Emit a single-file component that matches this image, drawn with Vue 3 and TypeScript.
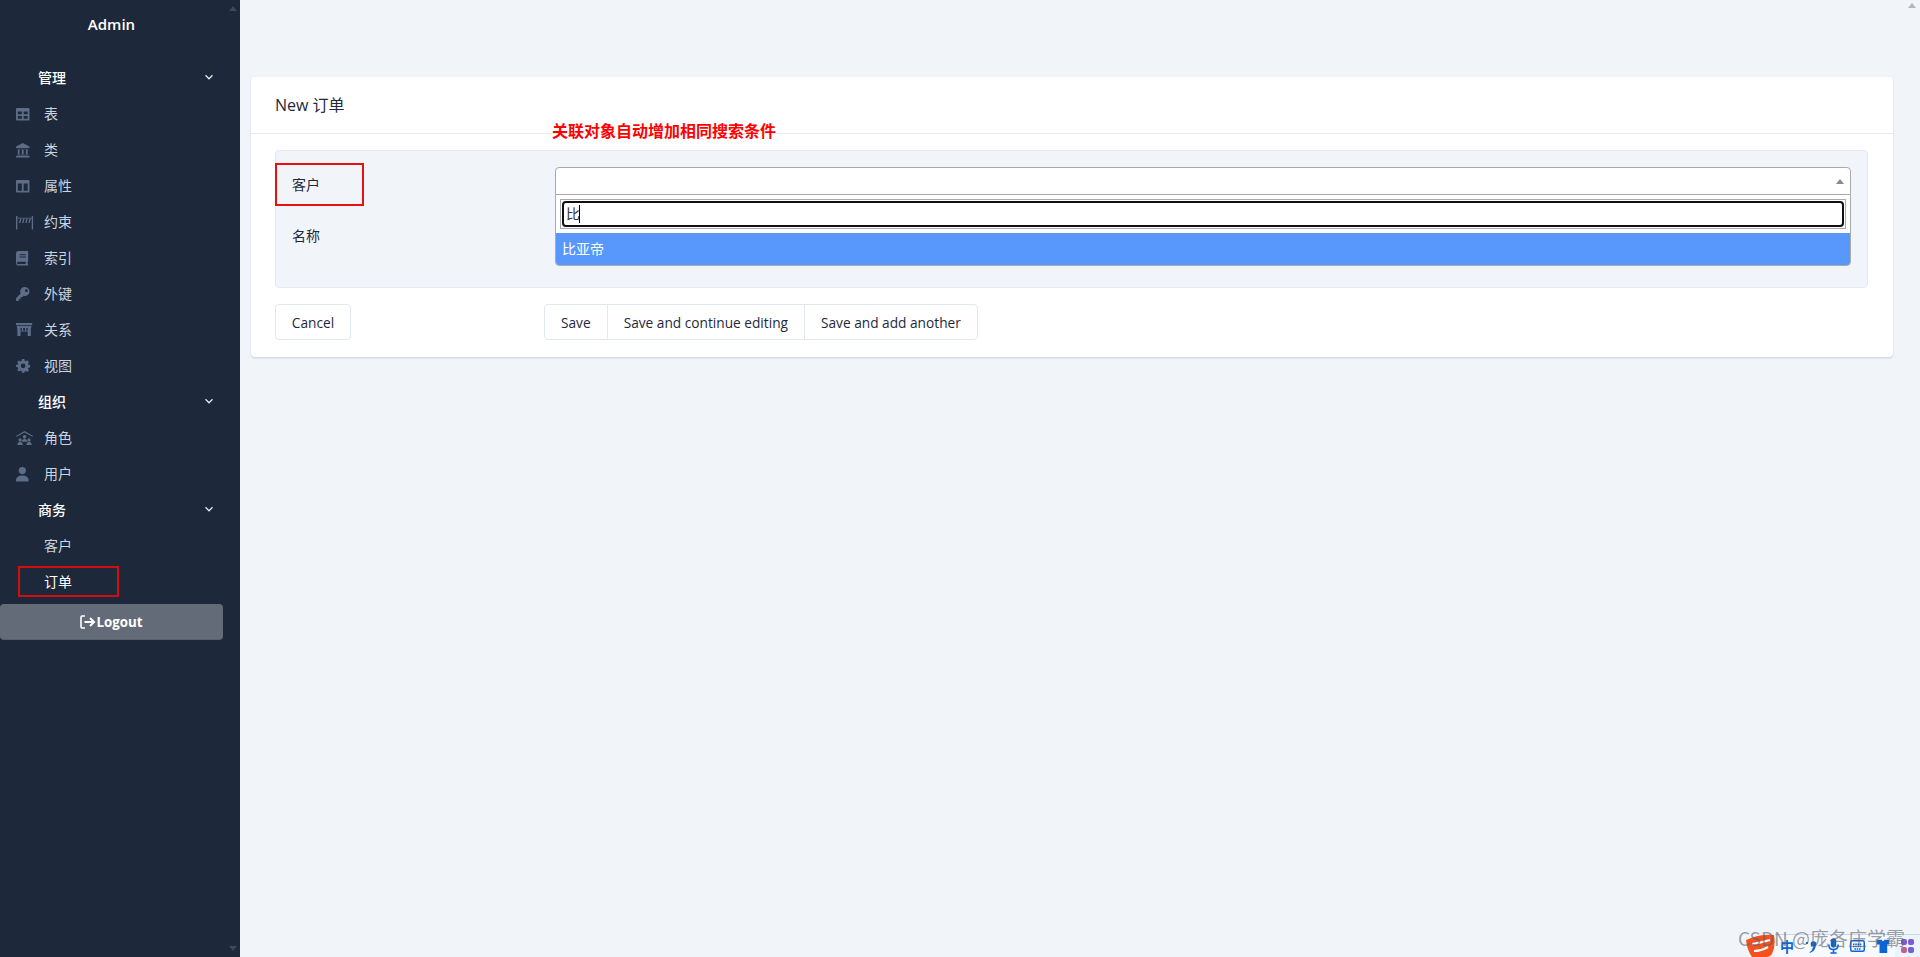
<script setup lang="ts">
interface NavItem {
  label: string
  icon?: string
  kind: 'group' | 'item'
  active?: boolean
}

const nav: NavItem[] = [
  { label: '管理', kind: 'group' },
  { label: '表', kind: 'item', icon: 'table' },
  { label: '类', kind: 'item', icon: 'bank' },
  { label: '属性', kind: 'item', icon: 'columns' },
  { label: '约束', kind: 'item', icon: 'barrier' },
  { label: '索引', kind: 'item', icon: 'book' },
  { label: '外键', kind: 'item', icon: 'key' },
  { label: '关系', kind: 'item', icon: 'torii' },
  { label: '视图', kind: 'item', icon: 'gear' },
  { label: '组织', kind: 'group' },
  { label: '角色', kind: 'item', icon: 'roles' },
  { label: '用户', kind: 'item', icon: 'user' },
  { label: '商务', kind: 'group' },
  { label: '客户', kind: 'item' },
  { label: '订单', kind: 'item', active: true }
]
</script>

<template>
  <div class="page">
    <aside class="sidebar">
      <div class="brand">Admin</div>
      <nav class="nav">
        <div
          v-for="n in nav"
          :key="n.label"
          class="nav-row"
          :class="[n.kind, { active: n.active }]"
        >
          <svg v-if="n.icon" class="ico" viewBox="0 0 20 17.800">
            <g v-if="n.icon === 'table'">
              <path fill-rule="evenodd" d="M1 1h13a1 1 0 0 1 1 1v12a1 1 0 0 1-1 1H1a1 1 0 0 1-1-1V2a1 1 0 0 1 1-1zm1 4v3h4.500V5zm6.500 0v3H13V5zM2 10v3h4.500v-3zm6.500 0v3H13v-3z" />
            </g>
            <g v-else-if="n.icon === 'bank'">
              <path d="M7.500 0 15 4v1.500H0V4zM1 6.500h13V7H1zM2 7.500h2v5H2zM6.500 7.500h2v5h-2zM11 7.500h2v5h-2zM1 13h13v1H1zM0 14.500h15V16H0z" />
            </g>
            <g v-else-if="n.icon === 'columns'">
              <path fill-rule="evenodd" d="M1 1h13a1 1 0 0 1 1 1v12a1 1 0 0 1-1 1H1a1 1 0 0 1-1-1V2a1 1 0 0 1 1-1zm1 4v8h4.500V5zm6.500 0v8H13V5z" />
            </g>
            <g v-else-if="n.icon === 'barrier'">
              <path d="M0 1h1.500v15H0zM17.500 1H19v15h-1.500zM1.500 3h16v1h-16z" />
              <path d="M4.500 4h1.500L4.800 9H3.300zM8 4h1.500L8.300 9H6.800zM11.500 4H13l-1.200 5h-1.500zM15 4h1.500l-1.200 5h-1.500z" />
            </g>
            <g v-else-if="n.icon === 'book'">
              <path fill-rule="evenodd" d="M2.500 0H13.500v11.500l-.6.8v1.400l.6.8V16H2.500A2.500 2.500 0 0 1 0 13.500v-11A2.500 2.500 0 0 1 2.500 0zM4 3.500v1.200h7V3.500zm0 2.500v1.200h7V6zm-1.500 6a1.300 1.300 0 0 0 0 2.600h8.300V12z" />
            </g>
            <g v-else-if="n.icon === 'key'">
              <path fill-rule="evenodd" d="M10 0a5 5 0 1 1-1.500 9.800L7 11.500H5V13.500H3V15.500H0v-3l5.200-5.200A5 5 0 0 1 10 0zm1.500 2.500a1.600 1.600 0 1 0 0 3.200 1.600 1.600 0 0 0 0-3.200z" />
            </g>
            <g v-else-if="n.icon === 'torii'">
              <path d="M0 0h18v2.500H0zM1 3.200h16v2.300H1zM1.500 5.500h3.500v9H1.500zM13 5.500h3.500v9H13zM6.500 5.500h1.500v3H6.500zM10 5.500h1.500v3H10zM5 8.500h8v1H5z" />
            </g>
            <g v-else-if="n.icon === 'gear'">
              <path fill-rule="evenodd" d="M6 0h3l.4 2.200 1.300.6L12.600 1.600l2 2.200-1.200 1.800.5 1.300L16 7.400v2.800l-2.100.4-.5 1.300 1.200 1.800-2 2-1.900-1.200-1.300.5L9 16.500H6l-.4-2-1.300-.5L2.400 15.200l-2-2 1.200-1.800-.5-1.300L-1 9.700V7l2.100-.4.5-1.300L.4 3.700l2-2L4.300 2.900l1.300-.6zM7.500 5.500a2.800 2.800 0 1 0 0 5.600 2.800 2.800 0 0 0 0-5.600z" transform="translate(1 0) scale(.92)" />
            </g>
            <g v-else-if="n.icon === 'roles'">
              <path d="M9.500 0 19 5.500l-.7 1L9.500 1.800.7 6.500 0 5.500z" />
              <circle cx="9.500" cy="6.500" r="2" /><path d="M6.300 12c0-2 1.400-3 3.200-3s3.200 1 3.200 3z" />
              <circle cx="4.500" cy="10" r="1.800" /><path d="M1.500 15.500c0-2 1.300-3.500 3-3.500s3 1.500 3 3.500z" />
              <circle cx="14.500" cy="10" r="1.800" /><path d="M11.500 15.500c0-2 1.300-3.500 3-3.500s3 1.500 3 3.500z" />
            </g>
            <g v-else-if="n.icon === 'user'">
              <circle cx="7" cy="4" r="4" /><path d="M0 16v-1.500C0 11.500 3 9.500 7 9.500s7 2 7 5V16z" />
            </g>
          </svg>
          <span class="nav-label">{{ n.label }}</span>
          <svg v-if="n.kind === 'group'" class="chev" viewBox="0 0 10 10">
            <path d="M1.500 3.300 5 6.800l3.500-3.500" fill="none" stroke="#e6e9ee" stroke-width="1.300" />
          </svg>
        </div>
      </nav>
      <button class="logout" type="button">
        <svg class="logout-ico" viewBox="0 0 16 14">
          <path d="M5 1H2.200C1.500 1 1 1.500 1 2.200v9.600c0 .7.500 1.200 1.200 1.200H5" fill="none" stroke="#fff" stroke-width="1.600" />
          <path d="M4.500 7H14M10 3l4 4-4 4" fill="none" stroke="#fff" stroke-width="2" />
        </svg>
        <span>Logout</span>
      </button>
      <span class="sb-arrow up"></span>
      <span class="sb-arrow down"></span>
    </aside>

    <main class="main">
      <span class="page-arrow"></span>
      <section class="card">
        <header class="card-head">New 订单</header>
        <div class="card-body">
          <div class="panel">
            <div class="row first">
              <label class="label">客户</label>
              <div class="field">
                <div class="select">
                  <span class="caret"></span>
                </div>
                <div class="dropdown">
                  <div class="search-wrap">
                    <div class="search">
                      <div class="search-inner"><span>比</span><i class="cursor"></i></div>
                    </div>
                  </div>
                  <div class="option">比亚帝</div>
                </div>
              </div>
            </div>
            <div class="row">
              <label class="label">名称</label>
            </div>
          </div>
          <div class="actions">
            <button class="btn cancel" type="button">Cancel</button>
            <div class="btn-group">
              <button class="btn" type="button">Save</button>
              <button class="btn" type="button">Save and continue editing</button>
              <button class="btn" type="button">Save and add another</button>
            </div>
          </div>
        </div>
        <div class="note">关联对象自动增加相同搜索条件</div>
        <div class="mark label-mark"></div>
      </section>
    </main>

    <div class="mark nav-mark"></div>

    <div class="ime">
      <svg class="ime-logo" viewBox="0 0 30 23">
        <path d="M1 6Q14 0 29 1 31 12 27 20 25 23 22 23H7Q2 16 1 6z" fill="#f4511e" />
        <path d="M7 10Q15 9 25 6M9 17Q16 17 23 13" fill="none" stroke="#fff" stroke-width="2.200" />
      </svg>
      <div class="ime-bar">
        <span class="ime-zh">中</span>
        <svg class="ime-i s12" viewBox="0 0 12 14"><circle cx="8.500" cy="5" r="2.800" fill="#0a66d8" /><path d="M1 3h2v2H1zM10.500 6c.5 3.500-1.500 6.500-5.500 8l-.5-1c2-1 3-2.500 3-4z" fill="#0a66d8" /></svg>
        <svg class="ime-i s11" viewBox="0 0 14 20"><rect x="3.500" y="0" width="7" height="12" rx="3.500" fill="#0a66d8" /><path d="M1 8c0 4 2.500 6.500 6 6.500s6-2.500 6-6.500M7 14.500V18M3 19h8" fill="none" stroke="#0a66d8" stroke-width="2" /></svg>
        <svg class="ime-i s15" viewBox="0 0 20 16"><rect x="1" y="1" width="18" height="14" rx="2" fill="none" stroke="#0a66d8" stroke-width="2" /><path d="M4 5.500h12M4 8.500h12M6 12h8" stroke="#0a66d8" stroke-width="2" stroke-dasharray="2 1" /></svg>
        <svg class="ime-i s13" viewBox="0 0 20 20"><path d="M1 1h7l1 2h2l1-2h7v7h-3v12H5V8H1z" fill="#0a66d8" /></svg>
        <div class="ime-grid"><i></i><i></i><i></i><i></i></div>
      </div>
    </div>
    <div class="watermark">CSDN @庞各庄学霸</div>
  </div>
</template>

<style>
html,
body {
  margin: 0;
  height: 100%;
  overflow: hidden;
}
</style>

<style scoped>
.page {
  position: relative;
  display: flex;
  width: 1920px;
  height: 957px;
  overflow: hidden;
  background: #f1f5f9;
  font-family: "Open Sans", "Noto Sans CJK SC", sans-serif;
  font-size: 14px;
  color: #1e293b;
}
.sidebar {
  position: relative;
  flex: 0 0 240px;
  box-sizing: border-box;
  background: #1d283a;
  color: #cbd5e1;
  padding-right: 17px;
}
.brand {
  height: 59px;
  padding-top: 13px;
  box-sizing: border-box;
  text-align: center;
  color: #fff;
  font-size: 15px;
  font-weight: 600;
  line-height: 22px;
}
.nav {
  display: flex;
  flex-direction: column;
}
.nav-row {
  position: relative;
  display: flex;
  align-items: center;
  height: 36px;
  padding-left: 16px;
}
.nav-row.group {
  padding-left: 38px;
  padding-right: 9px;
  color: #fff;
  font-weight: 500;
}
.nav-row.group .nav-label {
  flex: 1;
}
.nav-row.item {
  padding-left: 44px;
}
.nav-row.active {
  color: #fff;
}
.ico {
  position: absolute;
  left: 16px;
  top: 12px;
  width: 18px;
  height: 16px;
  fill: #5d6d88;
}
.chev {
  width: 10px;
  height: 10px;
}
.logout {
  display: flex;
  align-items: center;
  justify-content: center;
  width: 223px;
  height: 36px;
  margin-top: 5px;
  padding: 0;
  border: 0;
  border-bottom: 1px solid #586070;
  border-radius: 4px;
  background: #646b78;
  color: #fff;
  font: 700 13.300px "Open Sans", sans-serif;
}
.logout-ico {
  width: 16px;
  height: 14px;
}
.sb-arrow {
  position: absolute;
  right: 3px;
  width: 0;
  height: 0;
  border-left: 4px solid transparent;
  border-right: 4px solid transparent;
}
.sb-arrow.up {
  top: 6px;
  border-bottom: 5px solid #3d4859;
}
.sb-arrow.down {
  bottom: 6px;
  border-top: 5px solid #3d4859;
}
.main {
  position: relative;
  flex: 1;
  padding: 77px 27px 0 11px;
  box-sizing: border-box;
}
.page-arrow {
  position: absolute;
  top: 3px;
  right: 4px;
  width: 0;
  height: 0;
  border-left: 4px solid transparent;
  border-right: 4px solid transparent;
  border-bottom: 5px solid #b4b8bd;
}
.card {
  position: relative;
  height: 280px;
  box-sizing: border-box;
  background: #fff;
  border-radius: 4px;
  box-shadow: 0 1px 2px rgba(30, 41, 59, 0.18);
}
.card-head {
  height: 57px;
  box-sizing: border-box;
  padding: 17px 24px 0;
  border-bottom: 1px solid #e6e9ee;
  font-size: 16px;
  line-height: 22px;
}
.card-body {
  padding: 16px 25px 0 24px;
}
.panel {
  box-sizing: border-box;
  height: 138px;
  padding-top: 16px;
  background: #f1f5f9;
  border: 1px solid #e5e9ef;
  border-radius: 4px;
}
.row {
  display: flex;
  height: 51px;
}
.label {
  flex: 0 0 279px;
  box-sizing: border-box;
  padding: 6px 0 0 16px;
  line-height: 24px;
  font-size: 14px;
  color: #1e293b;
}
.field {
  position: relative;
  flex: 0 0 1296px;
  height: 28px;
}
.select {
  position: relative;
  box-sizing: border-box;
  height: 28px;
  background: #fff;
  border: 1px solid #aaa;
  border-radius: 4px 4px 0 0;
}
.caret {
  position: absolute;
  right: 6px;
  top: 11px;
  width: 0;
  height: 0;
  border-left: 4px solid transparent;
  border-right: 4px solid transparent;
  border-bottom: 5px solid #888;
}
.dropdown {
  position: absolute;
  z-index: 2;
  left: 0;
  right: 0;
  top: 27px;
  box-sizing: border-box;
  height: 72px;
  background: #fff;
  border: 1px solid #aaa;
  border-radius: 0 0 4px 4px;
  overflow: hidden;
}
.search-wrap {
  box-sizing: border-box;
  height: 38px;
  padding: 4px;
}
.search {
  box-sizing: border-box;
  height: 30px;
  padding: 1px;
  background: #fff;
  border: 1px solid #aaa;
}
.search-inner {
  display: flex;
  align-items: center;
  box-sizing: border-box;
  height: 26px;
  padding-left: 2px;
  background: #fff;
  border: 2px solid #101010;
  border-radius: 4px;
  color: #333;
  font-size: 14px;
  line-height: 20px;
}
.cursor {
  width: 1px;
  height: 18px;
  margin-left: -1px;
  background: #000;
}
.option {
  height: 32px;
  padding: 0 6px;
  background: #5897fb;
  color: #fff;
  font-size: 14px;
  line-height: 32px;
}
.actions {
  display: flex;
  justify-content: flex-start;
  margin-top: 16px;
}
.btn {
  box-sizing: border-box;
  height: 36px;
  padding: 0 16px;
  background: #fff;
  border: 1px solid #e2e8f0;
  color: #1e293b;
  font: 500 13.700px "Open Sans", sans-serif;
  white-space: nowrap;
}
.btn.cancel {
  width: 76px;
  padding: 0;
  border-radius: 4px;
  margin-right: 193px;
}
.btn-group {
  display: flex;
}
.btn-group .btn + .btn {
  margin-left: -1px;
}
.btn-group .btn:first-child {
  border-radius: 4px 0 0 4px;
}
.btn-group .btn:last-child {
  border-radius: 0 4px 4px 0;
}
.note {
  position: absolute;
  left: 301px;
  top: 42px;
  color: #f00;
  font: 700 16px/22px "Noto Sans CJK SC", sans-serif;
  white-space: nowrap;
}
.mark {
  position: absolute;
  box-sizing: border-box;
  border: 2px solid #e81010;
}
.label-mark {
  left: 24px;
  top: 86px;
  width: 89px;
  height: 43px;
}
.nav-mark {
  left: 18px;
  top: 566px;
  width: 101px;
  height: 31px;
  border-color: #d40d0d;
}
.ime {
  position: absolute;
  left: 1745px;
  right: 0;
  bottom: 0;
  display: flex;
  align-items: flex-end;
  height: 23px;
}
.ime-logo {
  flex: 0 0 30px;
  height: 23px;
}
.ime-bar {
  position: relative;
  flex: 1;
  display: flex;
  align-items: center;
  gap: 11px;
  height: 23px;
  box-sizing: border-box;
  padding-left: 5px;
  background: #f6f9fd;
  border-top: 1px solid #c3d9f0;
}
.ime-zh {
  width: 14px;
  color: #0a66d8;
  font: 700 14px/16px "Noto Sans CJK SC", sans-serif;
}
.ime-i.s12 {
  width: 12px;
  height: 14px;
}
.ime-i.s11 {
  width: 11px;
  height: 16px;
}
.ime-i.s15 {
  width: 15px;
  height: 12px;
}
.ime-i.s13 {
  width: 14px;
  height: 14px;
}
.ime-grid {
  position: absolute;
  top: 0;
  right: 0;
  bottom: 0;
  display: grid;
  grid-template-columns: repeat(2, 6px);
  gap: 1.500px;
  align-content: center;
  padding: 0 6px;
  background: #ecf3fb;
}
.ime-grid i {
  height: 6px;
  border-radius: 2px;
  background: #7a5ccf;
}
.ime-grid i:nth-child(3) {
  background: #c0608f;
}
.ime-grid i:nth-child(4) {
  background: #6a62d8;
}
.watermark {
  position: absolute;
  right: 15px;
  bottom: 9px;
  z-index: 3;
  color: rgba(90, 95, 105, 0.6);
  font: 400 19px/20px "Noto Sans CJK SC", sans-serif;
  white-space: nowrap;
  pointer-events: none;
}
</style>
